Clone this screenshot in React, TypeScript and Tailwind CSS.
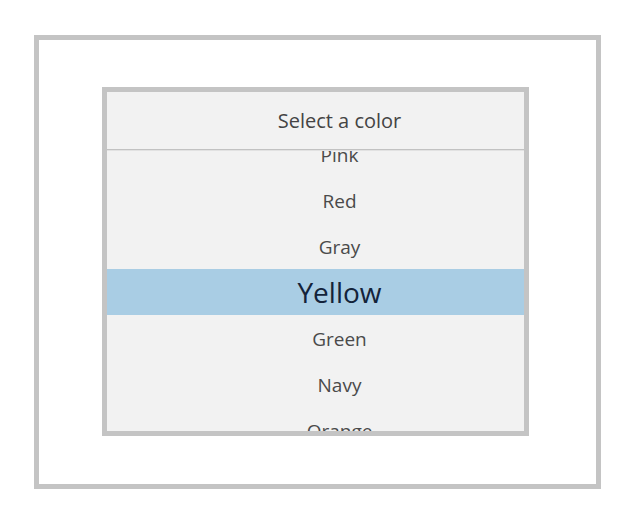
import React from 'react';

const COLORS = ['Pink', 'Red', 'Gray', 'Yellow', 'Green', 'Navy', 'Orange'];

export default function App() {
  const selected = 'Yellow';

  return (
    <div className="w-[622px] h-[525px] bg-white pt-[35px] pl-[34px]" style={{ fontFamily: '"Open Sans", "Noto Sans", sans-serif' }}>
      <div className="w-[567px] h-[454px] border-[5px] border-[#c4c4c4] pt-[47px] pl-[63px]">
        <div className="w-[427px] h-[349px] border-[5px] border-[#c4c4c4] bg-[#f2f2f2] flex flex-col">
          <div className="h-[58px] shrink-0 flex items-center justify-center pl-[48px] text-[20px] text-[#444444] border-b border-[#c2c2c2]">
            Select a color
          </div>
          <div className="flex-1 overflow-hidden border-t border-[#e2e2e2]">
            <div className="-mt-[20px]">
              {COLORS.map(c => (
                <div
                  key={c}
                  className={
                    c === selected
                      ? 'h-[46px] flex items-center justify-center pl-[48px] bg-[#a9cde4] text-[28px] text-[#13233a]'
                      : 'h-[46px] flex items-center justify-center pl-[48px] pt-[2px] text-[19px] text-[#4a4a4a]'
                  }
                >
                  {c}
                </div>
              ))}
            </div>
          </div>
        </div>
      </div>
    </div>
  );
}
